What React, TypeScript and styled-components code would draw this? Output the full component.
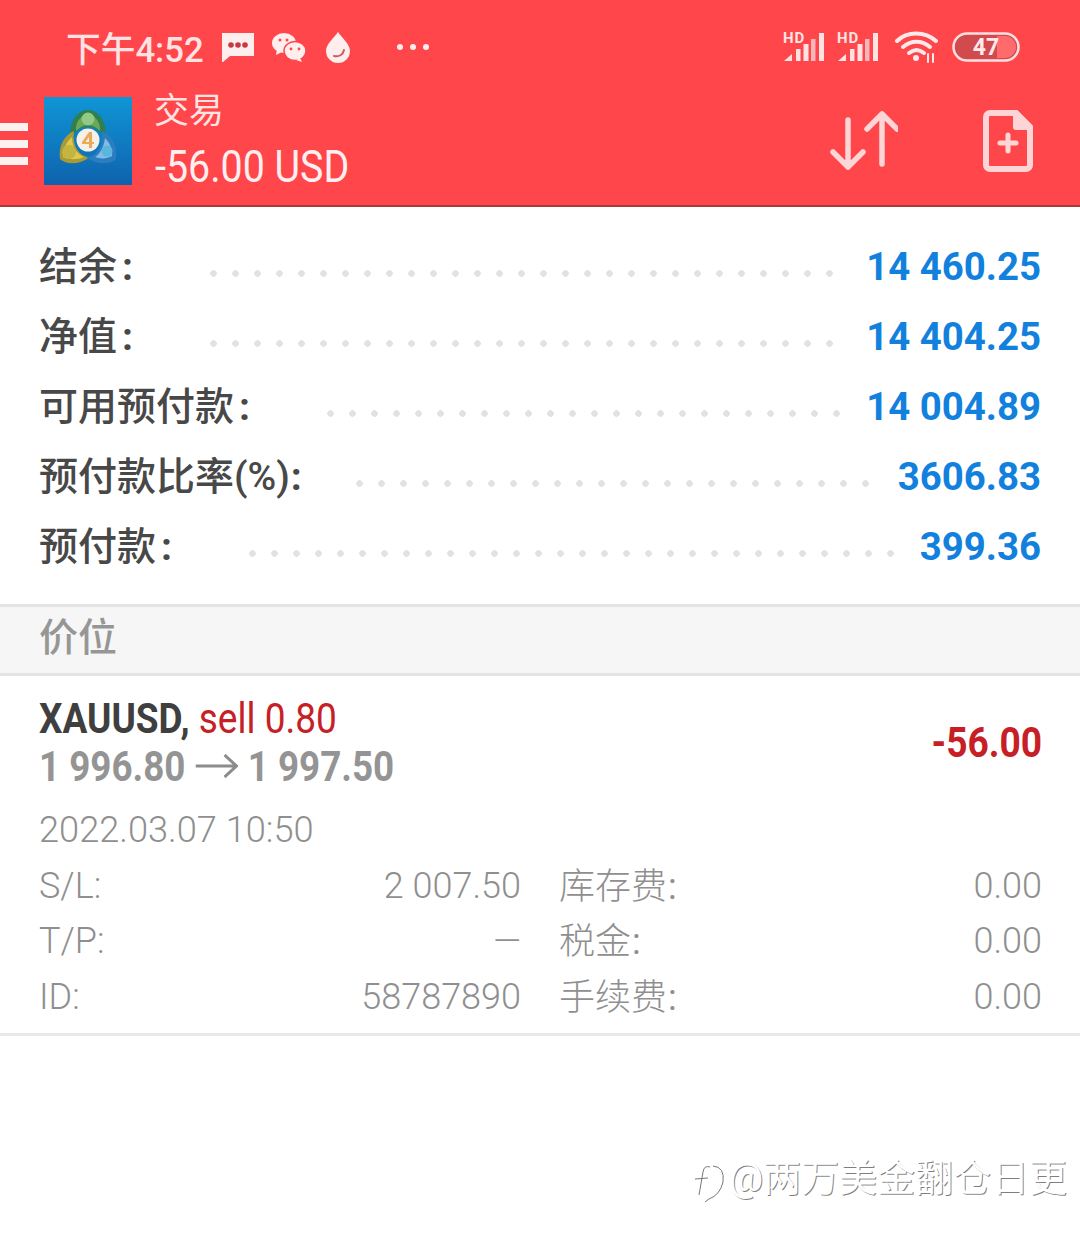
import React from "react";
import styled, { createGlobalStyle } from "styled-components";

const Global = createGlobalStyle`
  html, body { margin: 0; padding: 0; background: #fff; }
  body { font-family: Roboto, "Noto Sans CJK SC", sans-serif; }
`;
const CJK = `Roboto, "Noto Sans CJK SC", sans-serif`;

const Page = styled.div`
  position: relative;
  width: 1080px;
  height: 1241px;
  overflow: hidden;
  background: #fff;
  font-family: ${CJK};
`;
const Header = styled.header`
  height: 205px;
  background: #ff464a;
  border-bottom: 2px solid #a8383c;
  display: flex;
  flex-direction: column;
  color: #ffe9ea;
`;
const StatusBar = styled.div`
  height: 94px;
  display: flex;
  align-items: center;
  padding: 0 60px 0 66px;
`;
const Clock = styled.span`
  font-size: 34.7px;
  font-weight: 500;
  color: #ffe3e3;
  margin-right: 17px;
  white-space: nowrap;
`;
const StatusIcons = styled.div`
  display: flex;
  align-items: center;
  gap: 17px;
`;
const RightIcons = styled.div`
  display: flex;
  align-items: center;
  gap: 12px;
`;
const Spacer = styled.div`
  flex: 1;
`;
const Toolbar = styled.div`
  flex: 1;
  display: flex;
  align-items: flex-start;
`;
const Burger = styled.div`
  width: 28px;
  margin-top: 29px;
  margin-right: 16px;
  display: flex;
  flex-direction: column;
  gap: 9px;
`;
const BurgerLine = styled.div`
  height: 8px;
  background: #fdf0f1;
`;
const LogoBox = styled.div`
  flex: none;
  margin-top: 3px;
  line-height: 0;
`;
const TitleBlock = styled.div`
  margin-left: 22px;
  margin-top: -2px;
  display: flex;
  flex-direction: column;
  flex: 1;
`;
const TitleText = styled.div`
  font-size: 35px;
  line-height: 40px;
  font-weight: 400;
  color: #ffe3e3;
`;
const Balance = styled.div`
  font-size: 45px;
  line-height: 58px;
  margin: 6px 0 0 1px;
  color: #ffeff0;
  white-space: nowrap;
  transform: scaleX(0.875);
  transform-origin: left center;
`;
const Actions = styled.div`
  display: flex;
  align-items: flex-start;
  gap: 85px;
  padding: 16px 47px 0 0;
`;
const Summary = styled.section`
  height: 397px;
  padding-top: 24px;
  box-sizing: border-box;
  display: flex;
  flex-direction: column;
`;
const SummaryRow = styled.div`
  height: 70px;
  display: flex;
  align-items: center;
  padding: 0 39px 0 39px;
`;
const Label = styled.span`
  font-size: 39px;
  font-weight: 500;
  color: #484848;
  white-space: nowrap;
  padding-bottom: 6px;
`;
const Colon = styled.span<{ $flush: boolean }>`
  margin-left: ${(p) => (p.$flush ? 1 : 5)}px;
  font-weight: 700;
`;
const Dots = styled.span<{ $gap: number; $right: number }>`
  flex: 1;
  height: 7px;
  margin: 14px ${(p) => p.$right}px 0 ${(p) => p.$gap}px;
  background-image: radial-gradient(circle at 3.5px 3.5px, #e2e2e2 3px, transparent 3.5px);
  background-size: 22px 7px;
  background-repeat: repeat-x;
`;
const Value = styled.span`
  font-size: 38.4px;
  font-weight: 700;
  color: #1281dd;
  white-space: nowrap;
`;
const Band = styled.div`
  height: 72px;
  box-sizing: border-box;
  background: #f6f6f6;
  border-top: 3px solid #e4e4e4;
  border-bottom: 3px solid #e4e4e4;
  display: flex;
  align-items: center;
  padding: 0 0 12px 39px;
  font-size: 39px;
  font-weight: 500;
  color: #969696;
`;
const Position = styled.section`
  height: 360px;
  box-sizing: border-box;
  border-bottom: 3px solid #e8e8e8;
  padding: 18px 38px 0 39px;
  display: flex;
  flex-direction: column;
`;
const TopLine = styled.div`
  display: flex;
  justify-content: space-between;
`;
const Symbol = styled.div`
  height: 48px;
  line-height: 48px;
  font-size: 43px;
  white-space: nowrap;
  transform: scaleX(0.86);
  transform-origin: left center;
  font-weight: 700;
  color: #3f3f3f;
`;
const Side = styled.span`
  font-weight: 400;
  color: #c62026;
`;
const Prices = styled.div`
  height: 48px;
  line-height: 48px;
  font-size: 43px;
  white-space: nowrap;
  display: flex;
  align-items: center;
  transform: scaleX(0.855);
  transform-origin: left center;
  font-weight: 700;
  color: #949494;
`;
const PriceArrow = styled.svg`
  flex: none;
  margin: 0 11px 0 12px;
`;
const Profit = styled.div`
  font-size: 43px;
  font-weight: 700;
  color: #c62026;
  line-height: 48px;
  margin-top: 24px;
  transform: scaleX(0.863);
  transform-origin: right center;
`;
const OpenTime = styled.div`
  margin-top: 18px;
  font-size: 36.2px;
  line-height: 44px;
  font-weight: 300;
  color: #8f8f8f;
`;
const Details = styled.div`
  margin-top: 6px;
  display: grid;
  grid-template-columns: 482px 1fr;
  column-gap: 38px;
  grid-auto-rows: 55.5px;
  font-size: 36px;
  font-weight: 300;
  color: #8f8f8f;
`;
const Pair = styled.div`
  display: flex;
  justify-content: space-between;
  align-items: center;
`;
const CjkLabel = styled.span`
  padding-bottom: 6px;
`;
const CjkColon = styled.span`
  margin-left: 1px;
  font-weight: 400;
`;
const Watermark = styled.div`
  position: absolute;
  left: 695px;
  top: 1153px;
  display: flex;
  align-items: center;
  gap: 2px;
  font-size: 38px;
  line-height: 50px;
  font-weight: 400;
  color: #fff;
  text-shadow: 1px 1px 0 rgba(0, 0, 0, 0.5);
  white-space: nowrap;
`;

const Logo = () => (
  <svg width="88" height="88" viewBox="0 0 88 88">
    <defs>
      <linearGradient id="bg" x1="0" y1="0" x2="0" y2="1">
        <stop offset="0" stopColor="#0f96d6" />
        <stop offset="1" stopColor="#0f62ad" />
      </linearGradient>
    </defs>
    <rect width="88" height="88" fill="url(#bg)" />
    <path d="M27 40C24 26 33 13 44 13s20 13 17 27c-5-7-11-10-17-10s-12 3-17 10Z" fill="#2f7f4f" />
    <path d="M32 34c-1-9 5-16 12-16s13 7 12 16c-4-4-8-6-12-6s-8 2-12 6Z" fill="#6aa85a" />
    <path d="M30 34C20 38 14 50 16 62c6 6 20 6 30-2-10 0-18-10-16-26Z" fill="#a99a35" />
    <path d="M28 40c-6 5-9 12-9 20 6 3 14 3 21 0-7-3-12-10-12-20Z" fill="#dcc94e" />
    <path d="M58 34c10 4 16 16 14 28-6 6-20 6-30-2 10 0 18-10 16-26Z" fill="#2d7dbe" />
    <path d="M61 41c5 5 8 12 7 18-5 3-12 3-17 1 5-3 9-10 10-19Z" fill="#7fbde4" />
    <circle cx="44" cy="22" r="6.5" fill="#93c982" />
    <circle cx="25" cy="55" r="7" fill="#c4b440" />
    <circle cx="63" cy="54" r="5.5" fill="#5ab6dc" />
    <circle cx="44" cy="43" r="11.5" fill="#f6f0e6" />
    <path d="M45 35l-7 10v2h7v4h3v-4h2v-2h-2V35Zm0 5v5h-3.6Z" fill="#eca95a" />
  </svg>
);

const Chat = () => (
  <svg width="34" height="32" viewBox="0 0 34 32">
    <path d="M1 2h32v23H9l-7 6H1Z" fill="#ffeeee" />
    <circle cx="10" cy="14" r="2.8" fill="#c53b40" />
    <circle cx="17" cy="14" r="2.8" fill="#c53b40" />
    <circle cx="24" cy="14" r="2.8" fill="#c53b40" />
  </svg>
);
const Wechat = () => (
  <svg width="34" height="30" viewBox="0 0 34 30">
    <ellipse cx="12" cy="11" rx="12" ry="10" fill="#ffeeee" />
    <path d="M5 17l-1 6 6-3Z" fill="#ffeeee" />
    <ellipse cx="23" cy="19" rx="11" ry="9.5" fill="#ffeeee" stroke="#ff464a" strokeWidth="1.5" />
    <path d="M28 26l2 4-6-2Z" fill="#ffeeee" />
    <circle cx="8" cy="8" r="1.5" fill="#ff464a" />
    <circle cx="15" cy="8" r="1.5" fill="#ff464a" />
    <circle cx="19" cy="17" r="1.4" fill="#ff464a" />
    <circle cx="27" cy="17" r="1.4" fill="#ff464a" />
  </svg>
);
const Drop = () => (
  <svg width="26" height="32" viewBox="0 0 26 32" style={{ marginLeft: 2 }}>
    <path d="M13 1C9 7 1 13 1 20a12 12 0 0 0 24 0C25 13 17 7 13 1Z" fill="#ffeeee" />
    <path d="M9 25c5 1 9-1 10-6" fill="none" stroke="#d3565a" strokeWidth="2" strokeLinecap="round" />
  </svg>
);
const More = () => (
  <svg width="34" height="8" viewBox="0 0 34 8" style={{ marginLeft: 28 }}>
    <circle cx="4" cy="4" r="3" fill="#ffeeee" />
    <circle cx="17" cy="4" r="3" fill="#ffeeee" />
    <circle cx="30" cy="4" r="3" fill="#ffeeee" />
  </svg>
);
const Signal = () => (
  <svg width="42" height="32" viewBox="0 0 42 32" overflow="visible">
    <text x="0" y="12" fontFamily="Roboto" fontWeight="700" fontSize="15" letterSpacing="0.8" fill="#ffe3e3">HD</text>
    <path d="M1 30l8-7v7Z" fill="#ffe3e3" />
    <rect x="13" y="18" width="4.5" height="12" fill="#ffe3e3" />
    <rect x="20.5" y="13" width="5" height="17" fill="#ffe3e3" />
    <rect x="28" y="8" width="4.5" height="22" fill="#f4b6b8" />
    <rect x="36" y="2" width="5" height="28" fill="#ffe3e3" />
  </svg>
);
const Wifi = () => (
  <svg width="44" height="34" viewBox="0 0 44 34" fill="none" stroke="#ffe9ea" strokeLinecap="round">
    <path d="M2 11C12 1 30 1 41 11" strokeWidth="4" />
    <path d="M8 17c8-7 19-7 27 0" strokeWidth="4" />
    <path d="M14 23c5-4 10-4 15 0" strokeWidth="4" />
    <circle cx="21" cy="28" r="3" fill="#ffe9ea" stroke="none" />
    <path d="M33 24v8M38 24v8" strokeWidth="2" />
  </svg>
);
const Battery = () => (
  <svg width="68" height="30" viewBox="0 0 68 30">
    <rect x="1.5" y="1.5" width="65" height="27" rx="13.5" fill="#d04a4e" stroke="#ffdfdf" strokeWidth="2.5" />
    <path d="M45 4h8a11 11 0 0 1 0 22h-8Z" fill="#ff6a6c" />
    <text x="34" y="23" textAnchor="middle" fontFamily="Roboto" fontWeight="700" fontSize="23" fill="#ffe9ea">47</text>
  </svg>
);
const WifiWrap = styled.div`
  display: flex;
  margin: 0 1px 0 4px;
`;
const Sort = () => (
  <svg width="68" height="60" viewBox="0 0 68 60" fill="none" stroke="#fdd5d6" strokeWidth="5.5" strokeLinecap="round" strokeLinejoin="round" style={{ marginTop: 1 }}>
    <path d="M18 9v47M3 41l15 15 15-15" />
    <path d="M52 3v50M37 18 52 3l15 15" />
  </svg>
);
const NewDoc = () => (
  <svg width="50" height="62" viewBox="0 0 50 62" fill="none" stroke="#fdd5d6" strokeWidth="6" strokeLinejoin="round">
    <path d="M7 3h26l14 14v38a4 4 0 0 1-4 4H7a4 4 0 0 1-4-4V7a4 4 0 0 1 4-4Z" />
    <path d="M33 3v14h14Z" fill="#fdd5d6" />
    <path d="M17 33h16M25 25v16" strokeLinecap="round" strokeWidth="5" />
  </svg>
);

const rows: [string, string, string, number, number][] = [
  ["结余", ":", "14 460.25", 77, 32],
  ["净值", ":", "14 404.25", 77, 32],
  ["可用预付款", ":", "14 004.89", 77, 26],
  ["预付款比率(%)", ":", "3606.83", 54, 28],
  ["预付款", ":", "399.36", 77, 26],
];
const details: [string, string, string, string][] = [
  ["S/L:", "2 007.50", "库存费", "0.00"],
  ["T/P:", "—", "税金", "0.00"],
  ["ID:", "58787890", "手续费", "0.00"],
];

export default function App() {
  return (
    <Page>
      <Global />
      <Header>
        <StatusBar>
          <Clock>下午4:52</Clock>
          <StatusIcons>
            <Chat />
            <Wechat />
            <Drop />
            <More />
          </StatusIcons>
          <Spacer />
          <RightIcons>
            <Signal />
            <Signal />
            <WifiWrap>
              <Wifi />
            </WifiWrap>
            <Battery />
          </RightIcons>
        </StatusBar>
        <Toolbar>
          <Burger>
            <BurgerLine />
            <BurgerLine />
            <BurgerLine />
          </Burger>
          <LogoBox>
            <Logo />
          </LogoBox>
          <TitleBlock>
            <TitleText>交易</TitleText>
            <Balance>-56.00 USD</Balance>
          </TitleBlock>
          <Actions>
            <Sort />
            <NewDoc />
          </Actions>
        </Toolbar>
      </Header>
      <Summary>
        {rows.map(([l, c, v, g, r]) => (
          <SummaryRow key={l}>
            <Label>
              {l}
              <Colon $flush={l.endsWith(")")}>{c}</Colon>
            </Label>
            <Dots $gap={g} $right={r} />
            <Value>{v}</Value>
          </SummaryRow>
        ))}
      </Summary>
      <Band>价位</Band>
      <Position>
        <TopLine>
          <div>
            <Symbol>
              XAUUSD, <Side>sell 0.80</Side>
            </Symbol>
            <Prices>
              <span>1 996.80</span>
              <PriceArrow width="50" height="28" viewBox="0 0 50 28" fill="none" stroke="#8c8c8c" strokeWidth="3.2">
                <path d="M0 14h48M34 3l14 11-14 11" />
              </PriceArrow>
              <span>1 997.50</span>
            </Prices>
          </div>
          <Profit>-56.00</Profit>
        </TopLine>
        <OpenTime>2022.03.07 10:50</OpenTime>
        <Details>
          {details.map(([a, b, c, d]) => (
            <React.Fragment key={a}>
              <Pair>
                <span>{a}</span>
                <span>{b}</span>
              </Pair>
              <Pair>
                <CjkLabel>
                  {c}
                  <CjkColon>:</CjkColon>
                </CjkLabel>
                <span>{d}</span>
              </Pair>
            </React.Fragment>
          ))}
        </Details>
      </Position>
      <Watermark>
        <svg width="32" height="50" viewBox="0 0 32 50" fill="none" stroke="#777" strokeWidth="1">
          <path d="M18 13Q30 14 28 29Q25 42 14 46L10 49M8 19L4 42M8 19Q9 12 15 14M0 26L13 25" />
        </svg>
        <span>@两万美金翻仓日更</span>
      </Watermark>
    </Page>
  );
}
